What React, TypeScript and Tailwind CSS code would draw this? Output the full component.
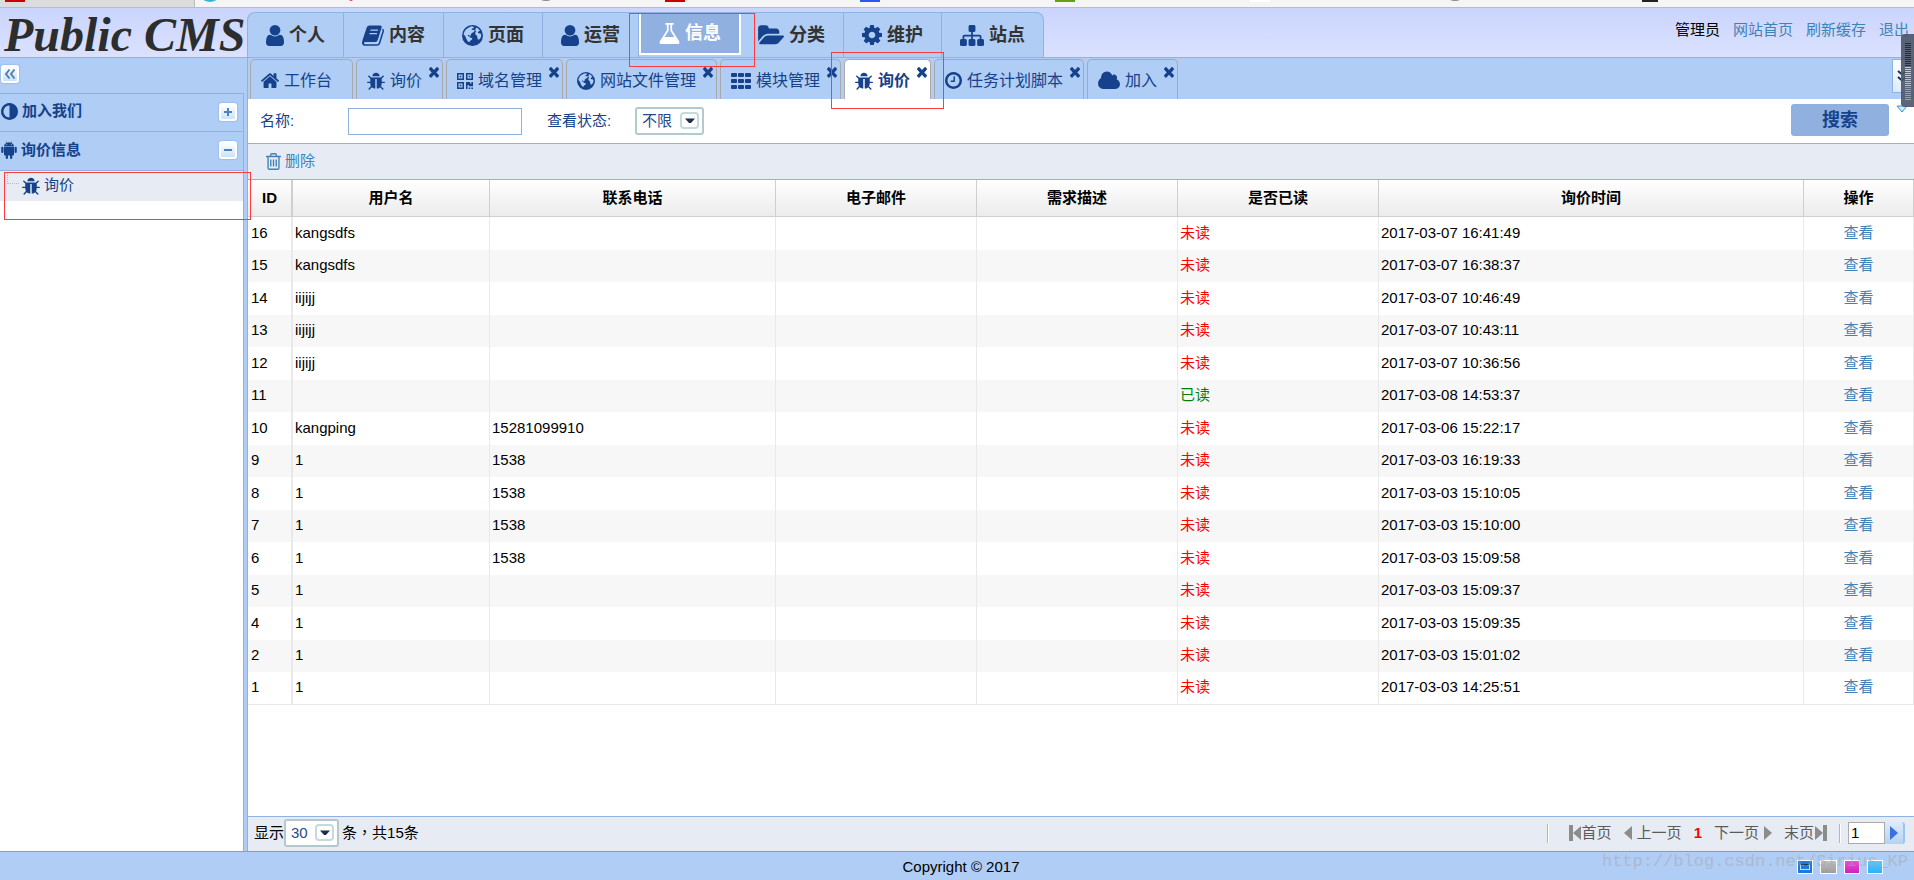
import type { ReactNode } from "react";
import clsx from "clsx";

type IconDef = { box: string; w: string; body: ReactNode };

const globeBody = (
  <path
    fillRule="evenodd"
    d="M768 0a768 768 0 1 0 0 1536a768 768 0 0 0 0-1536zM560 150l180-50 130 60-30 80-100 20-40 80 80 30 90-20 60 60-60 110-140 60-90 110 20 80-100 10-80-60-70 30 50 80 90-10 20 90 100 20 90 60-60 110-110 60-50 110-110-60-100-170-70-180-90-130-60-30 60-190 110-190zM1040 180l140 70 140 170-70 20-90 90 40 80 140 10 70 100-30 180-100 150-110 30-50-170-20-130-110-70-30-120 70-120-70-90z"
  />
);

const bugBody = (
  <path d="M1696 960q0 26-19 45t-45 19h-224q0 171-67 290l208 209q19 19 19 45t-19 45q-18 19-45 19t-45-19l-198-197q-5 5-15 13t-42 28.5-65 36.5-82 29-97 13v-896h-128v896q-51 0-101.5-13.5t-87-33-66-39-43.5-32.5l-15-14-183 207q-20 21-48 21-24 0-43-16-19-18-20.5-44.5t15.5-46.5l202-227q-58-114-58-274h-224q-26 0-45-19t-19-45 19-45 45-19h224v-294l-173-173q-19-19-19-45t19-45 45-19 45 19l173 173h844l173-173q19-19 45-19t45 19 19 45-19 45l-173 173v294h224q26 0 45 19t19 45zm-480-576h-640q0-133 93.5-226.5t226.5-93.5 226.5 93.5 93.5 226.5z" />
);

const userBody = (
  <path d="M1536 1399q0 109-62.5 187t-150.5 78h-854q-88 0-150.5-78t-62.5-187q0-85 8.5-160.5t31.5-152 58.5-131 94-89 134.5-34.5q131 128 313 128t313-128q76 0 134.5 34.5t94 89 58.5 131 31.5 152 8.5 160.5zm-256-887q0 159-112.5 271.5t-271.5 112.5-271.5-112.5-112.5-271.5 112.5-271.5 271.5-112.5 271.5 112.5 112.5 271.5z" />
);

const icons = {
  user: { box: "256 128 1280 1536", w: "w-[18px] h-[21px]", body: userBody },
  book: {
    box: "0 0 22 21",
    w: "w-[22px] h-[21px]",
    body: (
      <>
        <path
          fillRule="evenodd"
          d="M7.500.500h10.500q2.200 0 1.600 2l-3.800 12.500q-.6 2-2.600 2h-9.700q-1.800 0-1.300 1.400l-1.700.6q-.9-1.500-.1-3.500l4.300-13q.7-2 2.800-2zM8.700 4.500l-.4 1.300h7.500l.4-1.300zM7.700 8l-.4 1.300h7.500l.4-1.300z"
        />
        <path
          d="M20.400 4.200q1.200.6.800 2l-3.700 12q-.6 1.900-2.600 1.900h-11.400q-2.400 0-2.800-2.300"
          fill="none"
          stroke="currentColor"
          strokeWidth="1.500"
        />
      </>
    ),
  },
  globe: { box: "0 0 1536 1536", w: "w-[21px] h-[21px]", body: globeBody },
  flask: {
    box: "128 128 1536 1536",
    w: "w-[21px] h-[21px]",
    body: (
      <path d="M1591 1448q56 89 21.5 152.5t-140.5 63.5h-1152q-106 0-140.5-63.5t21.5-152.5l503-793v-399h-64q-26 0-45-19t-19-45 19-45 45-19h512q26 0 45 19t19 45-19 45-45 19h-64v399zm-779-725l-272 429h712l-272-429-20-31v-436h-128v436z" />
    ),
  },
  folder: {
    box: "0 192 1815 1408",
    w: "w-[25px] h-[19px]",
    body: (
      <path d="M1815 952q0 31-31 66l-336 396q-43 51-120.5 86.5t-143.5 35.5h-1088q-34 0-60.5-13t-26.5-43q0-31 31-66l336-396q43-51 120.5-86.5t143.5-35.5h1088q34 0 60.5 13t26.5 43zm-343-344v160h-832q-94 0-197 47.5t-164 119.5l-337 396-5 6q0-4-.5-12.5t-.5-12.5v-960q0-92 66-158t158-66h320q92 0 158 66t66 158v32h544q92 0 158 66t66 158z" />
    ),
  },
  cog: {
    box: "128 128 1536 1536",
    w: "w-[20px] h-[20px]",
    body: (
      <path d="M1152 896q0-106-75-181t-181-75-181 75-75 181 75 181 181 75 181-75 75-181zm512-109v222q0 12-8 23t-20 13l-185 28q-19 54-39 91 35 50 107 138 10 12 10 25t-9 23q-27 37-99 108t-94 71q-12 0-26-9l-138-108q-44 23-91 38-16 136-29 186-7 28-36 28h-222q-14 0-24.5-8.5t-11.5-21.5l-28-184q-49-16-90-37l-141 107q-10 9-25 9-14 0-25-11-126-114-165-168-7-10-7-23 0-12 8-23 15-21 51-66.5t54-70.5q-27-50-41-99l-183-27q-13-2-21-12.5t-8-23.5v-222q0-12 8-23t19-13l186-28q14-46 39-92-40-57-107-138-10-12-10-24 0-10 9-23 26-36 98.5-107.5t94.5-71.5q13 0 26 10l138 107q44-23 91-38 16-136 29-186 7-28 36-28h222q14 0 24.5 8.5t11.5 21.5l28 184q49 16 90 37l142-107q9-9 24-9 13 0 25 10 129 119 165 170 7 8 7 22 0 12-8 23-15 21-51 66.5t-54 70.5q26 50 41 98l183 28q13 2 21 12.5t8 23.5z" />
    ),
  },
  sitemap: {
    box: "0 128 1792 1536",
    w: "w-[24px] h-[21px]",
    body: (
      <path d="M1792 1248v320q0 40-28 68t-68 28h-320q-40 0-68-28t-28-68v-320q0-40 28-68t68-28h96v-192h-512v192h96q40 0 68 28t28 68v320q0 40-28 68t-68 28h-320q-40 0-68-28t-28-68v-320q0-40 28-68t68-28h96v-192h-512v192h96q40 0 68 28t28 68v320q0 40-28 68t-68 28h-320q-40 0-68-28t-28-68v-320q0-40 28-68t68-28h96v-192q0-52 38-90t90-38h512v-192h-96q-40 0-68-28t-28-68v-320q0-40 28-68t68-28h320q40 0 68 28t28 68v320q0 40-28 68t-68 28h-96v192h512q52 0 90 38t38 90v192h96q40 0 68 28t28 68z" />
    ),
  },
  home: {
    box: "89 230 1614 1306",
    w: "w-[18px] h-[15px]",
    body: (
      <path d="M1472 992v480q0 26-19 45t-45 19h-384v-384h-256v384h-384q-26 0-45-19t-19-45v-480q0-1 .5-3t.5-3l575-474 575 474q1 2 1 6zm223-69l-62 74q-8 9-21 11h-3q-13 0-21-7l-692-577-692 577q-12 8-24 7-13-2-21-11l-62-74q-8-10-7-23.5t11-21.5l719-599q32-26 76-26t76 26l244 204v-195q0-14 9-23t23-9h192q14 0 23 9t9 23v408l219 182q10 8 11 21.5t-7 23.5z" />
    ),
  },
  bug: { box: "96 0 1600 1664", w: "w-[18px] h-[18px]", body: bugBody },
  qrcode: {
    box: "0 0 16 16",
    w: "w-4 h-4",
    body: (
      <path
        fillRule="evenodd"
        d="M0 0h7v7h-7zM1.500 1.500v4h4v-4zM2.700 2.700h1.600v1.600h-1.600zM9 0h7v7h-7zM10.500 1.500v4h4v-4zM11.700 2.700h1.600v1.600h-1.600zM0 9h7v7h-7zM1.500 10.500v4h4v-4zM2.700 11.700h1.600v1.600h-1.600zM9 9h4v1.400h1.400v-1.400h1.600v4.300h-4.200v-1.400h-1.300v4.100h-1.500zM11.700 14.400h1.600v1.600h-1.600zM14.400 14.400h1.600v1.600h-1.600z"
      />
    ),
  },
  globeSmall: { box: "0 0 1536 1536", w: "w-[18px] h-[18px]", body: globeBody },
  th: {
    box: "0 0 20 16",
    w: "w-5 h-4",
    body: (
      <>
        {[0, 7, 14].map((x) =>
          [0, 6, 12].map((y) => (
            <rect key={`${x}-${y}`} x={x} y={y} width="6" height="4" rx="1" />
          ))
        )}
      </>
    ),
  },
  clock: {
    box: "128 128 1536 1536",
    w: "w-[17px] h-[17px]",
    body: (
      <path d="M1024 544v448q0 14-9 23t-23 9h-320q-14 0-23-9t-9-23v-64q0-14 9-23t23-9h224v-352q0-14 9-23t23-9h64q14 0 23 9t9 23zm416 352q0-148-73-273t-198-198-273-73-273 73-198 198-73 273 73 273 198 198 273 73 273-73 198-198 73-273zm224 0q0 209-103 385.5t-279.5 279.5-385.5 103-385.5-103-279.5-279.5-103-385.5 103-385.5 279.5-279.5 385.5-103 385.5 103 279.5 279.5 103 385.5z" />
    ),
  },
  cloud: {
    box: "64 256 1920 1280",
    w: "w-[22px] h-[16px]",
    body: (
      <path d="M1984 1152q0 159-112.5 271.5t-271.5 112.5h-1088q-185 0-316.5-131.5t-131.5-316.5q0-132 71-241.5t187-163.5q-2-28-2-43 0-212 150-362t362-150q158 0 286.5 88t187.5 230q70-62 166-62 106 0 181 75t75 181q0 75-41 138 129 30 213 134.5t84 239.5z" />
    ),
  },
  adjust: {
    box: "128 128 1536 1536",
    w: "w-[17px] h-[17px]",
    body: (
      <path d="M896 1440v-1088q-148 0-273 73t-198 198-73 273 73 273 198 198 273 73zm768-544q0 209-103 385.5t-279.5 279.5-385.5 103-385.5-103-279.5-279.5-103-385.5 103-385.5 279.5-279.5 385.5-103 385.5 103 279.5 279.5 103 385.5z" />
    ),
  },
  android: {
    box: "0 0 32 36",
    w: "w-4 h-[18px]",
    body: (
      <>
        <path
          fillRule="evenodd"
          d="M6 10.500a10 8 0 0 1 5.200-6.800L9.600 1l.8-.5 1.700 2.900a11 10 0 0 1 7.800 0L21.600.5l.8.5-1.600 2.700a10 8 0 0 1 5.200 6.800zM11.500 6a1 1 0 1 0 0 2a1 1 0 0 0 0-2zM20.500 6a1 1 0 1 0 0 2a1 1 0 0 0 0-2z"
        />
        <path d="M6 11.500h20v15.500q0 2-2 2h-1.500v4.800a2.200 2.200 0 0 1-4.400 0v-4.800h-4.200v4.800a2.200 2.200 0 0 1-4.400 0v-4.800h-1.500q-2 0-2-2z" />
        <rect x="0.500" y="11.500" width="4.400" height="12.500" rx="2.200" />
        <rect x="27.100" y="11.500" width="4.400" height="12.500" rx="2.200" />
      </>
    ),
  },
  trash: {
    box: "192 128 1408 1536",
    w: "w-[15px] h-[17px]",
    body: (
      <path d="M704 736v576q0 14-9 23t-23 9h-64q-14 0-23-9t-9-23v-576q0-14 9-23t23-9h64q14 0 23 9t9 23zm256 0v576q0 14-9 23t-23 9h-64q-14 0-23-9t-9-23v-576q0-14 9-23t23-9h64q14 0 23 9t9 23zm256 0v576q0 14-9 23t-23 9h-64q-14 0-23-9t-9-23v-576q0-14 9-23t23-9h64q14 0 23 9t9 23zm128 724v-948h-896v948q0 22 7 40.500t14.500 27 10.500 8.500h832q3 0 10.500-8.500t14.500-27 7-40.500zm-672-1076h448l-48-117q-7-9-17-11h-317q-10 2-17 11zm928 32v64q0 14-9 23t-23 9h-96v948q0 83-47 143.500t-113 60.500h-832q-66 0-113-58.500t-47-141.500v-952h-96q-14 0-23-9t-9-23v-64q0-14 9-23t23-9h309l70-167q15-37 54-63t79-26h320q40 0 79 26t54 63l70 167h309q14 0 23 9t9 23z" />
    ),
  },
  close: {
    box: "302 474 1188 1108",
    w: "w-[10px] h-[10px]",
    body: (
      <path d="M1490 1322q0 40-28 68l-136 136q-28 28-68 28t-68-28l-294-294-294 294q-28 28-68 28t-68-28l-136-136q-28-28-28-68t28-68l294-294-294-294q-28-28-28-68t28-68l136-136q28-28 68-28t68 28l294 294 294-294q28-28 68-28t68 28l136 136q28 28 28 68t-28 68l-294 294 294 294q28 28 28 68z" />
    ),
  },
} satisfies Record<string, IconDef>;

type IconName = keyof typeof icons;

const Icon = ({ name }: { name: IconName }) => {
  const icon = icons[name];
  return (
    <svg
      viewBox={icon.box}
      preserveAspectRatio="none"
      overflow="visible"
      className={clsx("shrink-0 fill-current", icon.w)}
      aria-hidden="true"
    >
      {icon.body}
    </svg>
  );
};

const navItems: { label: string; icon: IconName; active?: boolean }[] = [
  { label: "个人", icon: "user" },
  { label: "内容", icon: "book" },
  { label: "页面", icon: "globe" },
  { label: "运营", icon: "user" },
  { label: "信息", icon: "flask", active: true },
  { label: "分类", icon: "folder" },
  { label: "维护", icon: "cog" },
  { label: "站点", icon: "sitemap" },
];

const tabs: { label: string; icon: IconName; active?: boolean; fixed?: boolean }[] = [
  { label: "工作台", icon: "home", fixed: true },
  { label: "询价", icon: "bug" },
  { label: "域名管理", icon: "qrcode" },
  { label: "网站文件管理", icon: "globeSmall" },
  { label: "模块管理", icon: "th" },
  { label: "询价", icon: "bug", active: true },
  { label: "任务计划脚本", icon: "clock" },
  { label: "加入", icon: "cloud" },
];

const columns = [
  { title: "ID", width: "w-[45px]" },
  { title: "用户名", width: "w-[197px]" },
  { title: "联系电话", width: "w-[286px]" },
  { title: "电子邮件", width: "w-[201px]" },
  { title: "需求描述", width: "w-[201px]" },
  { title: "是否已读", width: "w-[201px]" },
  { title: "询价时间", width: "w-[425px]" },
  { title: "操作", width: "w-[110px]" },
];

const rows = [
  { id: 16, name: "kangsdfs", phone: "", read: false, time: "2017-03-07 16:41:49" },
  { id: 15, name: "kangsdfs", phone: "", read: false, time: "2017-03-07 16:38:37" },
  { id: 14, name: "iijijj", phone: "", read: false, time: "2017-03-07 10:46:49" },
  { id: 13, name: "iijijj", phone: "", read: false, time: "2017-03-07 10:43:11" },
  { id: 12, name: "iijijj", phone: "", read: false, time: "2017-03-07 10:36:56" },
  { id: 11, name: "", phone: "", read: true, time: "2017-03-08 14:53:37" },
  { id: 10, name: "kangping", phone: "15281099910", read: false, time: "2017-03-06 15:22:17" },
  { id: 9, name: "1", phone: "1538", read: false, time: "2017-03-03 16:19:33" },
  { id: 8, name: "1", phone: "1538", read: false, time: "2017-03-03 15:10:05" },
  { id: 7, name: "1", phone: "1538", read: false, time: "2017-03-03 15:10:00" },
  { id: 6, name: "1", phone: "1538", read: false, time: "2017-03-03 15:09:58" },
  { id: 5, name: "1", phone: "", read: false, time: "2017-03-03 15:09:37" },
  { id: 4, name: "1", phone: "", read: false, time: "2017-03-03 15:09:35" },
  { id: 2, name: "1", phone: "", read: false, time: "2017-03-03 15:01:02" },
  { id: 1, name: "1", phone: "", read: false, time: "2017-03-03 14:25:51" },
];

// bottom edge of the browser's own tab strip
const BrowserStrip = () => (
  <div className="flex h-2 shrink-0 overflow-hidden border-b border-[#bcbcbc] bg-[#f5f5f5]">
    <svg className="h-[7px] w-[1914px] shrink-0" aria-hidden="true">
      <rect x="0" y="0" width="195" height="7" fill="#dcdcdc" />
      <rect x="194" y="0" width="1" height="7" fill="#bcbcbc" />
      <rect x="5" y="0" width="20" height="2" fill="#c80000" />
      <ellipse cx="210" cy="-3" rx="8" ry="5" fill="#35b6d8" />
      <circle cx="351" cy="-1" r="2" fill="#f04040" />
      <ellipse cx="546" cy="-1" rx="5" ry="2" fill="#8a8a8a" />
      <rect x="665" y="0" width="20" height="2" fill="#c80000" />
      <rect x="860" y="0" width="20" height="2" fill="#2f55f5" />
      <rect x="1055" y="0" width="20" height="2" fill="#5fa30f" />
      <rect x="1250" y="0" width="20" height="2" fill="#ffffff" />
      <ellipse cx="1455" cy="-1" rx="5" ry="2" fill="#8a8a8a" />
      <rect x="1642" y="0" width="16" height="2" fill="#222222" />
    </svg>
  </div>
);

const Header = () => (
  <header className="flex h-[50px] shrink-0 border-b border-[#8fb2e2] bg-linear-to-b from-[#cad4fd] to-[#dbe2ff]">
    <div className="flex w-[247px] shrink-0 items-center pt-1 pl-1 font-['Liberation_Serif'] text-5xl leading-[46px] font-bold whitespace-nowrap text-[#2c2e2d] italic">
      Public CMS
    </div>
    <nav className="mt-1 flex rounded-t-lg border border-b-0 border-[#8fb2e2] bg-[#b0cdf5]">
      {navItems.map((item, i) => (
        <a
          key={item.label}
          href="#"
          className={clsx(
            "relative flex items-center gap-[5px] px-[18px] text-lg leading-6 font-bold whitespace-nowrap",
            item.active
              ? "mb-0.5 border-2 border-t-0 border-white bg-[#90b1df] text-white"
              : "text-[#333333]",
            !item.active && i < navItems.length - 1 && "border-r border-[#8fb2e2]"
          )}
        >
          <span className={item.active ? "text-white" : "text-[#15428b]"}>
            <Icon name={item.icon} />
          </span>
          {item.label}
          {item.active && (
            <span className="absolute top-0 -right-4 -left-3 z-20 h-[54px] border border-[#ff3b3b]" />
          )}
        </a>
      ))}
    </nav>
    <div className="ml-auto flex h-[45px] items-center gap-[13px] pr-[5px] text-[15px] text-[#3f82b8]">
      <span className="text-black">管理员</span>
      <a href="#">网站首页</a>
      <a href="#">刷新缓存</a>
      <a href="#">退出</a>
    </div>
  </header>
);

const SquareButton = ({ label, d }: { label: string; d: string }) => (
  <button
    type="button"
    aria-label={label}
    className="flex size-[18px] items-center justify-center rounded-[3px] border-2 border-white bg-linear-to-b from-white to-[#c9e2fb] shadow-[0_0_1px_1px_#9cc0ee]"
  >
    <svg viewBox="0 0 12 12" className="size-3 shrink-0 fill-none stroke-[#4f82b5] stroke-2">
      <path d={d} />
    </svg>
  </button>
);

const Sidebar = () => (
  <aside className="flex w-[244px] shrink-0 flex-col text-[15px] text-[#15428b]">
    <div className="flex h-[35px] items-center pb-1 pl-px">
      <SquareButton label="折叠" d="M5.500 1.500L2 6l3.500 4.500M10.500 1.500L7 6l3.500 4.500" />
    </div>
    <div className="flex flex-1 flex-col border-t border-r border-[#8fb2e2] bg-white">
      <div className="flex h-[38px] items-center justify-between border-b border-[#8fb2e2] bg-[#b0cdf5] pr-1.5 pb-0.5 pl-px font-bold">
        <span className="flex items-center gap-1">
          <Icon name="adjust" />
          加入我们
        </span>
        <SquareButton label="展开" d="M2 6h8M6 2v8" />
      </div>
      <div className="flex h-[39px] items-center justify-between border-b border-[#8fb2e2] bg-[#b0cdf5] pr-1.5 pb-0.5 pl-px font-bold">
        <span className="flex items-center gap-1">
          <Icon name="android" />
          询价信息
        </span>
        <SquareButton label="收起" d="M2 6h8" />
      </div>
      <div className="relative flex h-[30px] items-center bg-[#e7ecf4] pb-px pl-[7px]">
        <span className="mb-4 h-3 w-3 border-b border-l border-dotted border-[#bbbbbb]" />
        <a href="#" className="flex items-center gap-1 pl-[3px]">
          <Icon name="bug" />
          询价
        </a>
        <span className="absolute top-px left-1 z-20 h-12 w-[247px] border border-[#ff3b3b]" />
      </div>
    </div>
  </aside>
);

const TabBar = () => (
  <div className="flex h-[41px] shrink-0 items-start justify-between pt-px pl-0.5">
    <div className="flex h-10 gap-[3px]">
      {tabs.map((tab, i) => (
        <div
          key={i}
          className={clsx(
            "relative flex rounded-t-[5px] border border-b-0 border-[#a9a9a9] pr-5 pl-[10px] text-base whitespace-nowrap text-[#15428b]",
            tab.active && "bg-white font-bold"
          )}
        >
          <a href="#" className="flex items-center gap-[5px] pt-0.5">
            <Icon name={tab.icon} />
            {tab.label}
          </a>
          {!tab.fixed && (
            <button type="button" aria-label="关闭" className="absolute top-2 right-[3px]">
              <Icon name="close" />
            </button>
          )}
          {tab.active && (
            <span className="absolute -inset-x-[14px] -top-2 z-20 h-[57px] border border-[#ff3b3b]" />
          )}
        </div>
      ))}
    </div>
    <button
      type="button"
      aria-label="更多标签"
      className="flex h-[34px] w-[22px] items-center border border-[#8fb2e2] bg-linear-to-b from-white to-[#dcebfc] pl-1"
    >
      <svg viewBox="0 0 12 12" className="size-3 fill-none stroke-[#1c2f52] stroke-2">
        <path d="M1 1l4 3.500L9 1M1 7l4 3.500L9 7" />
      </svg>
    </button>
  </div>
);

const Combo = ({ id, value, className }: { id: string; value: string; className: string }) => (
  <span className={clsx("relative flex h-7", className)}>
    <select
      id={id}
      defaultValue={value}
      className="w-full appearance-none rounded-[3px] border-2 border-[#b3c9cf] bg-white pl-[5px] text-[15px] text-[#2a4a8a]"
    >
      <option>{value}</option>
    </select>
    <span className="pointer-events-none absolute top-[5px] right-[5px] flex h-[17px] w-[19px] items-center justify-center rounded-sm border-2 border-[#c5dade] bg-white">
      <svg viewBox="0 0 10 6" className="h-[6px] w-[10px] shrink-0 fill-[#1c2f52]">
        <path d="M0 0.500h10L6 5h-2z" />
      </svg>
    </span>
  </span>
);

const SearchForm = () => (
  <form className="flex h-[45px] shrink-0 items-center border-b border-[#8fb2e2] bg-white pr-1.5 pl-3 text-[15px] text-[#15428b]">
    <label htmlFor="name" className="w-[88px]">
      名称:
    </label>
    <input id="name" type="text" className="h-[27px] w-[174px] border border-[#8fb2dc] px-1" />
    <label htmlFor="status" className="ml-[25px] w-[88px]">
      查看状态:
    </label>
    <Combo id="status" value="不限" className="w-[69px]" />
    <button
      type="button"
      className="mr-[7px] mb-0.5 ml-auto h-8 w-[98px] rounded-[3px] bg-[#90b1df] text-lg leading-6 font-bold"
    >
      搜索
    </button>
    <svg viewBox="0 0 12 8" className="mb-6 h-2 w-3 fill-[#c9f1ff] stroke-[#3d8fc4]">
      <path d="M1 1h10L6 7z" />
    </svg>
  </form>
);

const InquiryTable = () => (
  <table className="w-full table-fixed border-separate border-spacing-0 text-[15px] leading-5 text-black">
    <thead>
      <tr className="h-[37px] bg-linear-to-b from-white to-[#ebebeb]">
        {columns.map((col, i) => (
          <th
            key={col.title}
            className={clsx(
              "border-r border-b border-[#cfcfcf] p-0 text-center font-bold",
              i === 0 && "border-r-2",
              col.width
            )}
          >
            {col.title}
          </th>
        ))}
      </tr>
    </thead>
    <tbody className="[&_td]:border-r [&_td]:border-[#e9e9e9] [&_td]:p-0 [&_td]:pb-0.5 [&_td]:pl-0.5 [&_td:first-child]:border-r-2 [&_td:first-child]:pl-[3px] [&_td:last-child]:pl-0 [&>tr:last-child>td]:border-b">
      {rows.map((row) => (
        <tr key={row.id} className="odd:h-[33px] even:h-8 even:bg-[#f7f7f7]">
          <td>{row.id}</td>
          <td>{row.name}</td>
          <td>{row.phone}</td>
          <td />
          <td />
          <td className={row.read ? "text-[#008000]" : "text-[#ff0000]"}>
            {row.read ? "已读" : "未读"}
          </td>
          <td>{row.time}</td>
          <td className="text-center">
            <a href="#" className="text-[#3f82b8]">
              查看
            </a>
          </td>
        </tr>
      ))}
    </tbody>
  </table>
);

const Arrow = ({ d, wide }: { d: string; wide?: boolean }) => (
  <svg
    viewBox={wide ? "0 0 13 16" : "0 0 9 16"}
    className={clsx("h-4 shrink-0 fill-[#8c8c8c]", wide ? "w-[13px]" : "w-[9px]")}
    aria-hidden="true"
  >
    <path d={d} />
  </svg>
);

const Separator = () => (
  <span className="h-[19px] w-0.5 border-r border-l border-r-white border-l-[#99bbe8]" />
);

const Pagination = () => (
  <div className="flex h-[35px] shrink-0 items-center border-t border-[#8fb2e2] bg-[#e7ecf4] pb-0.5 pl-1.5 text-[15px] text-black">
    <label htmlFor="pageSize">显示</label>
    <Combo id="pageSize" value="30" className="w-[55px]" />
    <span className="ml-[3px]">
      条<span className="font-['Noto_Sans_CJK_TC']">，</span>共15条
    </span>
    <div className="ml-auto flex items-center pr-[9px] text-[#5a5a5a]">
      <Separator />
      <a href="#" className="ml-5 flex items-center">
        <Arrow wide d="M0 0h4v16h-4zM12 1v14L4 8z" />
        首页
      </a>
      <a href="#" className="ml-3 flex items-center gap-1">
        <Arrow d="M8 1v14L0 8z" />
        上一页
      </a>
      <span className="mx-3 font-bold text-[#ff0000]">1</span>
      <a href="#" className="flex items-center gap-1">
        下一页
        <Arrow d="M1 1v14l8-7z" />
      </a>
      <a href="#" className="mr-3 ml-3 flex items-center">
        末页
        <Arrow wide d="M1 1v14l8-7zM9 0h4v16h-4z" />
      </a>
      <Separator />
      <input
        type="text"
        aria-label="页码"
        defaultValue="1"
        className="ml-[7px] h-[22px] w-[37px] border border-[#ababab] bg-white px-0.5 text-black"
      />
      <button
        type="button"
        aria-label="跳转"
        className="flex h-[22px] w-5 items-center justify-center rounded-r-[3px] border-r-2 border-[#9fc3ee] bg-linear-to-b from-[#dcecfb] to-[#b4d3f5]"
      >
        <svg viewBox="0 0 8 14" className="h-[14px] w-2 fill-[#3a70e0]">
          <path d="M0 0v14l8-7z" />
        </svg>
      </button>
    </div>
  </div>
);

const Footer = () => (
  <footer className="grid h-[29px] shrink-0 grid-cols-3 items-center border-t border-[#7ba0cb] bg-[#b0cdf5] text-[15px] text-black">
    <span />
    <span className="pt-0.5 pl-2 text-center">Copyright © 2017</span>
    <div className="relative flex items-center justify-end gap-[7px] pt-0.5 pr-[31px]">
      <button
        type="button"
        aria-label="蓝色主题"
        className="flex h-[14px] w-4 items-center justify-center border border-white bg-[#1f78dd]"
      >
        <span className="h-1.5 w-2.5 border border-[#bfe0ff] border-t-[#12345f]" />
      </button>
      <button type="button" aria-label="灰色主题" className="h-[14px] w-[17px] border border-white bg-linear-to-b from-[#c0c0c0] to-[#9c9c9c]" />
      <button type="button" aria-label="紫色主题" className="h-[14px] w-4 border border-white bg-linear-to-b from-[#e84fd8] to-[#c920bd]" />
      <button type="button" aria-label="天蓝主题" className="h-[14px] w-4 border border-white bg-linear-to-b from-[#5cc6fb] to-[#2fb0f6]" />
      <span className="pointer-events-none absolute -top-1.5 right-1.5 font-['Liberation_Mono'] text-[17px] leading-5 text-[#a5a5a5]/50">
        http://blog.csdn.net/Sirius_KP
      </span>
    </div>
  </footer>
);

// floating meter pinned to the right edge of the window
const Meter = () => (
  <div className="absolute top-[34px] right-0 z-30 flex h-[73px] w-[13px] justify-center rounded-l-[4px] border border-r-0 border-[#55617a] bg-[#4b5569]/90 pt-2">
    <svg viewBox="0 0 6 58" className="h-[58px] w-1.5">
      {Array.from({ length: 29 }, (_, i) => (
        <rect
          key={i}
          x="0"
          y={i * 2}
          width="6"
          height="1"
          fill={i < 12 ? "#262d3a" : i < 17 ? "#d8d84a" : i < 22 ? "#9adb7c" : "#4fc7a4"}
        />
      ))}
    </svg>
  </div>
);

const App = () => {
  return (
    <div className="relative flex min-h-screen flex-col overflow-hidden bg-[#b0cdf5] font-['Liberation_Sans','Noto_Sans_CJK_SC',sans-serif]">
      <BrowserStrip />
      <Header />
      <div className="flex flex-1">
        <Sidebar />
        <main className="ml-[3px] flex min-w-0 flex-1 flex-col border-l border-[#8fb2e2]">
          <TabBar />
          <SearchForm />
          <div className="flex h-9 shrink-0 items-center border-b border-[#8fb2e2] bg-[#e7ecf4] pl-[18px] text-[15px] text-[#3f82b8]">
            <button type="button" className="flex items-center gap-1">
              <Icon name="trash" />
              删除
            </button>
          </div>
          <div className="flex-1 bg-white">
            <InquiryTable />
          </div>
          <Pagination />
        </main>
      </div>
      <Footer />
      <Meter />
    </div>
  );
};

export default App;
